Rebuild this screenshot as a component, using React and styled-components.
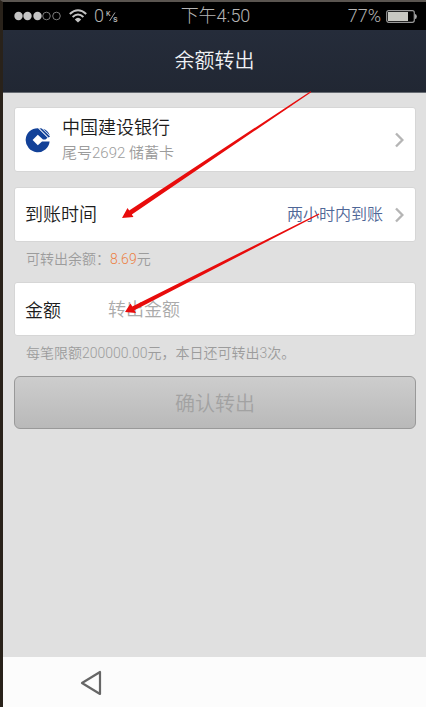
import React, { useState } from "react";
import styled, { createGlobalStyle } from "styled-components";

const GlobalStyle = createGlobalStyle`
  * {
    box-sizing: border-box;
  }

  body {
    margin: 0;
    background: #e0e0e0;
    font-family: Roboto, "Noto Sans CJK SC", sans-serif;
  }

  button,
  input {
    font-family: inherit;
  }
`;

const Screen = styled.div`
  position: relative;
  display: flex;
  flex-direction: column;
  min-height: 100vh;
  border-top: 2px solid #5a5550;
  border-left: 3px solid #29221a;
  background: #e0e0e0;
`;

const StatusBar = styled.div`
  display: grid;
  grid-template-columns: 1fr auto 1fr;
  align-items: center;
  height: 28px;
  padding: 0 9px 0 11px;
  background: #000;
  color: #b4b4b4;
  font-size: 18px;
  font-weight: 300;
  line-height: 28px;
`;

const StatusGroup = styled.div`
  display: flex;
  align-items: center;
  justify-content: ${({ $end }) => ($end ? "flex-end" : "flex-start")};
  gap: ${({ $end }) => ($end ? "5px" : "7px")};
`;

const Speed = styled.span`
  display: flex;
  align-items: center;
  gap: 2px;
`;

const Header = styled.header`
  display: flex;
  align-items: center;
  justify-content: center;
  height: 63px;
  border-bottom: 1px solid #666b72;
  background: linear-gradient(#252c3a, #212733);
`;

const Title = styled.h1`
  margin: 0;
  color: #f0f2f5;
  font-size: 20px;
  font-weight: 350;
  line-height: 30px;
`;

const Content = styled.main`
  flex: 1;
  padding: 14px 10px 0 11px;
`;

const CardButton = styled.button`
  display: flex;
  align-items: center;
  width: 100%;
  height: ${({ $tall }) => ($tall ? "65px" : "55px")};
  margin: 0 0 ${({ $tall }) => ($tall ? "15px" : "0")};
  padding: 0 11px 0 10px;
  border: 1px solid #d6d6d6;
  border-radius: 3px;
  background: #fff;
  color: #1c1c1c;
  text-align: left;
`;

const BankInfo = styled.span`
  display: flex;
  flex: 1;
  flex-direction: column;
  margin-left: 11px;
`;

const BankName = styled.span`
  font-size: 18px;
  font-weight: 350;
  line-height: 26px;
`;

const BankCard = styled.span`
  color: #9c9c9c;
  font-size: 15px;
  font-weight: 350;
  line-height: 24px;
`;

const Label = styled.span`
  flex: 1;
  font-size: 18px;
  font-weight: 350;
  line-height: 26px;
`;

const Value = styled.span`
  margin-right: 12px;
  color: #4f6797;
  font-size: 16px;
  font-weight: 350;
  line-height: 26px;
`;

const Note = styled.p`
  margin: 0 0 6px;
  padding: 0 12px;
  color: #9c9c9c;
  font-size: 14px;
  font-weight: 350;
  line-height: 34px;
`;

const Balance = styled.span`
  color: #ec7f42;
`;

const AmountCard = styled.label`
  display: flex;
  align-items: center;
  height: 54px;
  padding: 0 11px 0 10px;
  border: 1px solid #d6d6d6;
  border-radius: 3px;
  background: #fff;
  color: #1c1c1c;
  font-size: 18px;
  font-weight: 350;
`;

const AmountInput = styled.input`
  flex: 1;
  min-width: 0;
  margin-left: 47px;
  padding: 0;
  border: 0;
  outline: 0;
  background: transparent;
  color: #1c1c1c;
  font-size: 18px;
  font-weight: 350;

  &::placeholder {
    color: #aaa;
    opacity: 1;
  }
`;

const SubmitButton = styled.button`
  display: block;
  width: 100%;
  height: 53px;
  padding: 0;
  border: 1px solid #999;
  border-radius: 6px;
  background: linear-gradient(#cdcdcd, #b9b9b9);
  color: #a2a2a2;
  font-size: 20px;
  font-weight: 350;
`;

const NavBar = styled.nav`
  display: flex;
  align-items: center;
  height: 50px;
  padding: 2px 76px 0;
  background: #fcfcfc;
`;

const BackButton = styled.button`
  display: flex;
  padding: 0;
  border: 0;
  background: none;
`;

const Arrows = styled.svg`
  position: absolute;
  top: 88px;
  left: 117px;
  pointer-events: none;
`;

const SignalIcon = () => (
  <svg width="48" height="10" viewBox="0 0 48 10">
    {[5, 14, 24, 33, 43].map((x, index) => (
      <circle
        key={x}
        cx={x - 0.5}
        cy="5"
        r={index < 3 ? 4.2 : 3.8}
        fill={index < 3 ? "#c4c4c4" : "none"}
        stroke={index < 3 ? "none" : "#8a8a8a"}
        strokeWidth="0.9"
      />
    ))}
  </svg>
);

const WifiIcon = () => (
  <svg width="18" height="14" viewBox="0 0 18 14" fill="none" stroke="#c4c4c4">
    <path d="M0.8 5 Q9 -2.4 17.2 5" strokeWidth="2" />
    <path d="M3.6 8 Q9 3 14.4 8" strokeWidth="2" />
    <path d="M5.8 10.4 Q9 7.2 12.2 10.4 L9 13.6 Z" fill="#c4c4c4" stroke="none" />
  </svg>
);

const SpeedUnit = () => (
  <svg width="13" height="13" viewBox="0 0 13 13" fill="#b4b4b4">
    <text x="0" y="6" fontSize="7" fontWeight="500">
      K
    </text>
    <path d="M3.5 11 L9 2.5" stroke="#b4b4b4" strokeWidth="0.9" />
    <text x="7" y="12" fontSize="9" fontWeight="500">
      s
    </text>
  </svg>
);

const BatteryIcon = () => (
  <svg width="31" height="13" viewBox="0 0 31 13">
    <rect x="0.7" y="0.7" width="27.6" height="11.6" rx="2" fill="none" stroke="#999" strokeWidth="1.2" />
    <rect x="2" y="2" width="20" height="9" fill="#c8c8c2" />
    <path d="M29 4 Q30.8 4 30.8 6.5 Q30.8 9 29 9 Z" fill="#aaa" />
  </svg>
);

const BankLogo = () => (
  <svg width="26" height="26" viewBox="0 0 26 26">
    <path
      fill="#124198"
      d="M13 1.2 L22.6 10.8 L20.4 12.6 L18 12.6 L12.8 7.8 L7.6 13 L12.8 18.2 L17 14.4 L24.6 14.4 A12 12 0 1 1 13 1.2 Z"
    />
    <path fill="#124198" d="M14.4 1.2 L16.8 1.4 L25 9.6 L23.6 10.6 Z" />
    <path fill="#124198" d="M18 1.8 A12 12 0 0 1 25 8.6 Z" />
  </svg>
);

const ChevronIcon = () => (
  <svg width="9" height="16" viewBox="0 0 9 16">
    <path d="M1 1.5 L7.4 8 L1 14.5" fill="none" stroke="#b5b5b5" strokeWidth="2.4" />
  </svg>
);

const App = () => {
  const [amount, setAmount] = useState("");

  return (
    <>
      <GlobalStyle />
      <Screen>
        <StatusBar>
          <StatusGroup>
            <SignalIcon />
            <WifiIcon />
            <Speed>
              0
              <SpeedUnit />
            </Speed>
          </StatusGroup>
          <span>下午4:50</span>
          <StatusGroup $end>
            <span>77%</span>
            <BatteryIcon />
          </StatusGroup>
        </StatusBar>
        <Header>
          <Title>余额转出</Title>
        </Header>
        <Content>
          <CardButton type="button" $tall>
            <BankLogo />
            <BankInfo>
              <BankName>中国建设银行</BankName>
              <BankCard>尾号2692 储蓄卡</BankCard>
            </BankInfo>
            <ChevronIcon />
          </CardButton>
          <CardButton type="button">
            <Label>到账时间</Label>
            <Value>两小时内到账</Value>
            <ChevronIcon />
          </CardButton>
          <Note>
            可转出余额：<Balance>8.69</Balance>元
          </Note>
          <AmountCard htmlFor="amount">
            金额
            <AmountInput
              id="amount"
              inputMode="decimal"
              placeholder="转出金额"
              value={amount}
              onChange={(e) => setAmount(e.target.value)}
            />
          </AmountCard>
          <Note>每笔限额200000.00元，本日还可转出3次。</Note>
          <SubmitButton type="button" disabled>
            确认转出
          </SubmitButton>
        </Content>
        <NavBar>
          <BackButton type="button" aria-label="返回">
            <svg width="24" height="26" viewBox="0 0 24 26">
              <path
                d="M3 13 L21 2 L21 24 Z"
                fill="none"
                stroke="#666"
                strokeWidth="2.2"
                strokeLinejoin="round"
              />
            </svg>
          </BackButton>
        </NavBar>
        <Arrows width="204" height="226" viewBox="120 90 204 226" aria-hidden="true">
          <g fill="#e80c0c">
            <path d="M122 218 L127.5 208 L129.2 210.5 L310.6 91.2 L311.2 92.2 L131.8 214.4 L133.5 217 Z" />
            <path d="M125 312 L130.5 303.5 L132.3 306.4 L318.8 213.4 L319.4 214.4 L134.4 310.2 L136 313 Z" />
          </g>
        </Arrows>
      </Screen>
    </>
  );
};

export default App;
